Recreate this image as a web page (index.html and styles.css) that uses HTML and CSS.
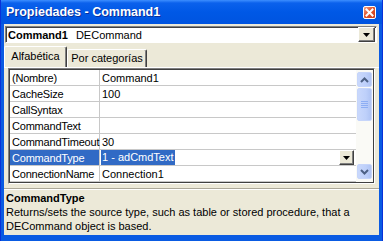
FILE: index.html
```html
<!DOCTYPE html>
<html>
<head>
<meta charset="utf-8">
<link rel="stylesheet" href="styles.css">
<title>Propiedades - Command1</title>
</head>
<body>
<div class="window">
  <div class="titlebar">
    <span class="title">Propiedades - Command1</span>
    <span class="close">
      <svg width="11" height="11" viewBox="0 0 11 11"><path d="M2.5 2.5 L8.5 8.5 M8.5 2.5 L2.5 8.5" stroke="#fff" stroke-width="2" stroke-linecap="square"/></svg>
    </span>
  </div>
  <div class="client">
    <div class="combo">
      <span class="combo-text"><b>Command1</b>DECommand</span>
      <span class="btn drop"><svg width="7" height="4" viewBox="0 0 7 4"><path d="M0 0 H7 L3.5 4 Z" fill="#000"/></svg></span>
    </div>
    <div class="tabs">
      <div class="tab active">Alfabética</div>
      <div class="tab">Por categorías</div>
    </div>
    <div class="panel">
      <div class="grid">
        <div class="grid-in">
          <div class="rows">
            <div class="row"><div class="name">(Nombre)</div><div class="value">Command1</div></div>
            <div class="row"><div class="name">CacheSize</div><div class="value">100</div></div>
            <div class="row"><div class="name">CallSyntax</div><div class="value"></div></div>
            <div class="row"><div class="name">CommandText</div><div class="value"></div></div>
            <div class="row"><div class="name">CommandTimeout</div><div class="value">30</div></div>
            <div class="row sel"><div class="name">CommandType</div><div class="value"><span class="hl">1 - adCmdText</span><span class="btn vdrop"><svg width="7" height="4" viewBox="0 0 7 4"><path d="M0 0 H7 L3.5 4 Z" fill="#000"/></svg></span></div></div>
            <div class="row"><div class="name">ConnectionName</div><div class="value">Connection1</div></div>
          </div>
          <div class="scroll">
            <div class="sbtn"><svg width="9" height="6" viewBox="0 0 9 6"><path d="M1 5 L4.5 1.5 L8 5" fill="none" stroke="#4D6185" stroke-width="2"/></svg></div>
            <div class="thumb"><i></i><i></i><i></i><i></i></div>
            <div class="track"></div>
            <div class="sbtn"><svg width="9" height="6" viewBox="0 0 9 6"><path d="M1 1 L4.5 4.5 L8 1" fill="none" stroke="#4D6185" stroke-width="2"/></svg></div>
          </div>
        </div>
      </div>
    </div>
    <div class="sep"></div>
    <div class="desc">
      <div class="desc-title">CommandType</div>
      <div>Returns/sets the source type, such as table or stored procedure, that a<br>DECommand object is based.</div>
    </div>
  </div>
</div>
</body>
</html>
```
FILE: styles.css
```css
body{
    margin:0;
    font-family:"Liberation Sans", Arial, sans-serif;
    font-size:11px;
    color:#000;
}
.window{
    width:383px;
    height:241px;
    box-sizing:border-box;
    background:#0A5BE2;
    border-left:1px solid #0831D9;
    border-right:1px solid #0831D9;
    display:flex;
    flex-direction:column;
}
.titlebar{
    height:24px;
    flex:none;
    display:flex;
    align-items:center;
    justify-content:space-between;
    padding:0 6px 0 5px;
    background:linear-gradient(#3D8EFF, #0B61EC 3px, #0058E6 50%, #0054E0);
    color:#fff;
    font-weight:bold;
    font-size:12.5px;
}
.title{
    text-shadow:1px 1px #0A2F9A;
}
.close{
    width:13px;
    height:13px;
    box-sizing:border-box;
    border:1px solid #fff;
    border-radius:2px;
    background:linear-gradient(135deg, #F4A389, #E2572F 45%, #C83B1B);
    display:flex;
    align-items:center;
    justify-content:center;
}
.close svg{
    display:block;
}
.client{
    flex:1;
    margin:0 3px 6px 3px;
    background:#ECE9D8;
    display:flex;
    flex-direction:column;
}
.btn{
    box-sizing:border-box;
    background:#ECE9D8;
    border-top:1px solid #fff;
    border-left:1px solid #fff;
    border-right:1px solid #404040;
    border-bottom:1px solid #404040;
    box-shadow:inset -1px -1px #808080;
    display:flex;
    align-items:center;
    justify-content:center;
}
.btn svg{
    display:block;
}
.combo{
    margin:2px 2px 0 1px;
    height:17px;
    box-sizing:border-box;
    background:#fff;
    border-top:1px solid #808080;
    border-left:1px solid #808080;
    border-right:1px solid #fff;
    border-bottom:1px solid #fff;
    box-shadow:inset 1px 1px #404040;
    display:flex;
    align-items:center;
}
.combo-text{
    padding-left:2px;
    flex:1;
}
.combo-text b{
    margin-right:8px;
}
.drop{
    width:17px;
    height:15px;
    margin-right:1px;
}
.tabs{
    height:24px;
    flex:none;
    display:flex;
    align-items:flex-end;
}
.tab{
    box-sizing:border-box;
    width:80px;
    height:18px;
    line-height:16px;
    text-align:center;
    border-top:1px solid #fff;
    border-left:1px solid #fff;
    border-right:1px solid #404040;
    box-shadow:inset -1px 0 #808080;
    border-radius:2px 2px 0 0;
}
.tab.active{
    width:63px;
    height:21px;
    line-height:19px;
}
.panel{
    border-top:1px solid #fff;
    padding:0 4px;
}
.grid{
    height:116px;
    box-sizing:border-box;
    border-top:1px solid #808080;
    border-left:1px solid #808080;
    border-right:1px solid #fff;
    border-bottom:1px solid #fff;
}
.grid-in{
    height:100%;
    box-sizing:border-box;
    border:1px solid #404040;
    background:#fff;
    display:flex;
    overflow:hidden;
}
.rows{
    flex:1;
}
.row{
    display:flex;
    height:16px;
    box-sizing:border-box;
    border-bottom:1px solid #C8C8C8;
    line-height:16px;
}
.name{
    width:90px;
    box-sizing:border-box;
    border-right:1px solid #C8C8C8;
    padding-left:2px;
    white-space:nowrap;
    letter-spacing:-0.2px;
}
.value{
    flex:1;
    display:flex;
    align-items:flex-start;
    padding-left:2px;
}
.sel .name{
    background:#316AC5;
    color:#fff;
}
.hl{
    background:#316AC5;
    color:#fff;
    padding:0 1px;
    margin-left:-1px;
    line-height:15px;
}
.vdrop{
    width:15px;
    height:15px;
    margin-left:auto;
    margin-right:2px;
}
.scroll{
    width:17px;
    flex:none;
    background:#FAFAF6;
    display:flex;
    flex-direction:column;
    align-items:center;
    padding:2px 0 3px;
    box-sizing:border-box;
}
.sbtn,
.thumb{
    width:15px;
    box-sizing:border-box;
    border:1px solid #C6D5FA;
    border-radius:2px;
    background:linear-gradient(90deg, #C9D8FC, #BED0FA 60%, #AFC4F4);
    display:flex;
    align-items:center;
    justify-content:center;
}
.sbtn{
    height:15px;
}
.thumb{
    height:33px;
    margin-top:1px;
    flex-direction:column;
    gap:1px;
}
.thumb i{
    display:block;
    width:7px;
    height:1px;
    background:#8DAEF4;
}
.track{
    flex:1;
}
.sep{
    margin-top:4px;
    border-top:1px solid #ACA899;
    border-bottom:1px solid #fff;
}
.desc{
    padding:1px 2px 0;
    line-height:14px;
}
.desc-title{
    font-weight:bold;
}
```
